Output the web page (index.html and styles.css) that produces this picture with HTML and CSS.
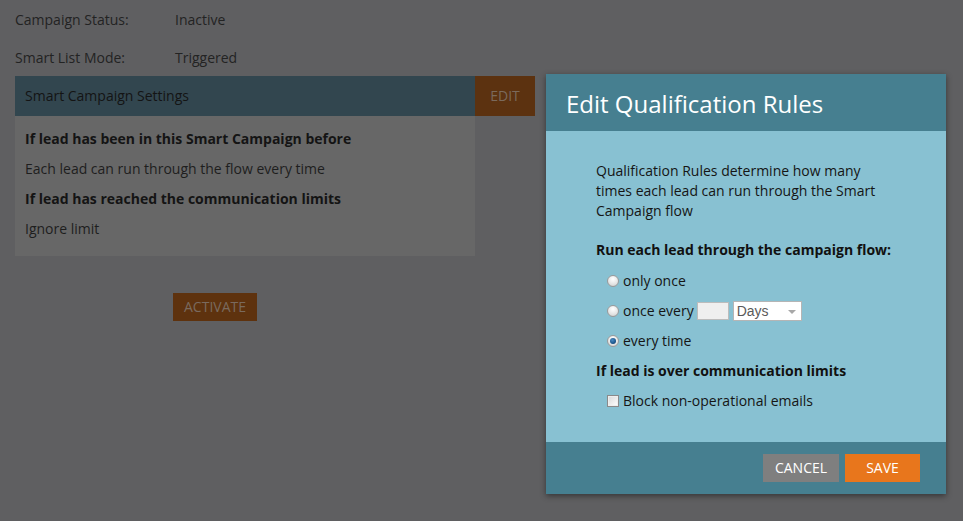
FILE: index.html
```html
<!DOCTYPE html>
<html>
<head>
<meta charset="utf-8">
<link rel="stylesheet" href="styles.css">
</head>
<body>
<div class="page">
  <div class="info-row"><span class="info-label">Campaign Status:</span><span class="info-value">Inactive</span></div>
  <div class="info-row"><span class="info-label">Smart List Mode:</span><span class="info-value">Triggered</span></div>
  <div class="settings">
    <div class="settings-head">
      <div class="settings-title">Smart Campaign Settings</div>
      <div class="edit-btn">EDIT</div>
    </div>
    <div class="settings-body">
      <div class="line bold">If lead has been in this Smart Campaign before</div>
      <div class="line">Each lead can run through the flow every time</div>
      <div class="line bold">If lead has reached the communication limits</div>
      <div class="line">Ignore limit</div>
    </div>
  </div>
  <div class="activate">ACTIVATE</div>
</div>

<div class="modal">
  <div class="modal-head">Edit Qualification Rules</div>
  <div class="modal-body">
    <p class="intro">Qualification Rules determine how many times each lead can run through the Smart Campaign flow</p>
    <div class="row heading">Run each lead through the campaign flow:</div>
    <div class="row opt"><span class="radio"></span>only once</div>
    <div class="row opt"><span class="radio"></span>once every<span class="num-input"></span><span class="select">Days<span class="caret"></span></span></div>
    <div class="row opt"><span class="radio checked"></span>every time</div>
    <div class="row heading">If lead is over communication limits</div>
    <div class="row opt"><span class="check"></span>Block non-operational emails</div>
  </div>
  <div class="modal-foot">
    <div class="btn cancel">CANCEL</div>
    <div class="btn save">SAVE</div>
  </div>
</div>
</body>
</html>
```

FILE: styles.css
```css
html, body {
  margin: 0;
  padding: 0;
  background: #5f5f61;
  font-family: "Open Sans", "Noto Sans", sans-serif;
  font-size: 14px;
  color: #1e1e1e;
  width: 963px;
  height: 521px;
  overflow: hidden;
}

.page {
  padding-left: 15px;
  padding-top: 1px;
}

.info-row {
  display: flex;
  height: 38px;
  line-height: 38px;
  color: #232323;
}

.info-row:nth-child(2) {
  height: 37px;
  line-height: 37px;
}

.info-label {
  width: 160px;
}

.settings {
  width: 520px;
}

.settings-head {
  display: flex;
  height: 40px;
}

.settings-title {
  width: 450px;
  padding-left: 10px;
  background: #32464f;
  line-height: 40px;
  color: #141414;
}

.edit-btn {
  width: 60px;
  background: #5c3210;
  color: #7b6a5c;
  line-height: 40px;
  text-align: center;
}

.settings-body {
  width: 450px;
  padding: 8px 0 12px 10px;
  background: #676767;
}

.line {
  line-height: 30px;
  color: #1e1e1e;
}

.line.bold {
  font-weight: bold;
  color: #141414;
}

.activate {
  margin: 37px 0 0 158px;
  width: 84px;
  height: 28px;
  line-height: 28px;
  text-align: center;
  background: #5e320e;
  color: #7a6a5e;
}

.modal {
  position: absolute;
  left: 546px;
  top: 74px;
  width: 400px;
  height: 420px;
  display: flex;
  flex-direction: column;
  box-shadow: 0 2px 6px rgba(0, 0, 0, 0.45);
}

.modal-head {
  height: 57px;
  background: #467f90;
  color: #ffffff;
  font-size: 24px;
  line-height: 60px;
  padding-left: 20px;
}

.modal-body {
  flex: 1;
  background: #88c1d2;
  padding: 30px 50px 0 50px;
  color: #151515;
}

.intro {
  margin: 0;
  line-height: 20px;
}

.row {
  height: 30px;
  line-height: 30px;
  display: flex;
  align-items: center;
}

.row.heading {
  font-weight: bold;
  color: #111111;
}

.intro + .row.heading {
  margin-top: 14px;
  margin-bottom: 1px;
}

.row.opt {
  padding-left: 11px;
}

.radio {
  width: 10px;
  height: 10px;
  border-radius: 50%;
  border: 1px solid #9a9a9a;
  background: radial-gradient(circle at 50% 30%, #ffffff 0%, #e4e4e4 60%, #c8c8c8 100%);
  margin-right: 4px;
  position: relative;
  box-sizing: content-box;
}

.radio.checked::after {
  content: "";
  position: absolute;
  left: 2px;
  top: 2px;
  width: 6px;
  height: 6px;
  border-radius: 50%;
  background: radial-gradient(circle at 40% 35%, #4a8bc4 0%, #174f84 70%, #0e3a66 100%);
}

.check {
  width: 10px;
  height: 10px;
  border: 1px solid #8a8a8a;
  background: linear-gradient(135deg, #d8d8d8 0%, #ffffff 100%);
  box-shadow: inset 0 0 0 1px #eeeeee;
  margin-right: 4px;
}

.num-input {
  width: 30px;
  height: 16px;
  border: 1px solid #bcbcbc;
  background: #efefef;
  margin-left: 3px;
}

.select {
  position: relative;
  height: 18px;
  border: 1px solid #b5b5b5;
  background: #ffffff;
  margin-left: 4px;
  color: #5a5a5a;
  font-family: "Liberation Sans", Arial, sans-serif;
  font-size: 14px;
  line-height: 18px;
  padding-left: 3px;
  box-sizing: content-box;
  width: 64px;
}

.caret {
  position: absolute;
  right: 5px;
  top: 8px;
  width: 0;
  height: 0;
  border-left: 4px solid transparent;
  border-right: 4px solid transparent;
  border-top: 4px solid #a8a8a8;
}

.modal-foot {
  height: 52px;
  background: #467f90;
  display: flex;
  justify-content: flex-end;
  align-items: flex-start;
  padding: 12px 26px 0 0;
  box-sizing: border-box;
  gap: 6px;
}

.btn {
  height: 28px;
  line-height: 28px;
  text-align: center;
  color: #ffffff;
  font-size: 14px;
}

.cancel {
  width: 76px;
  background: #7f7f7f;
}

.save {
  width: 75px;
  background: #e8761c;
}
```
